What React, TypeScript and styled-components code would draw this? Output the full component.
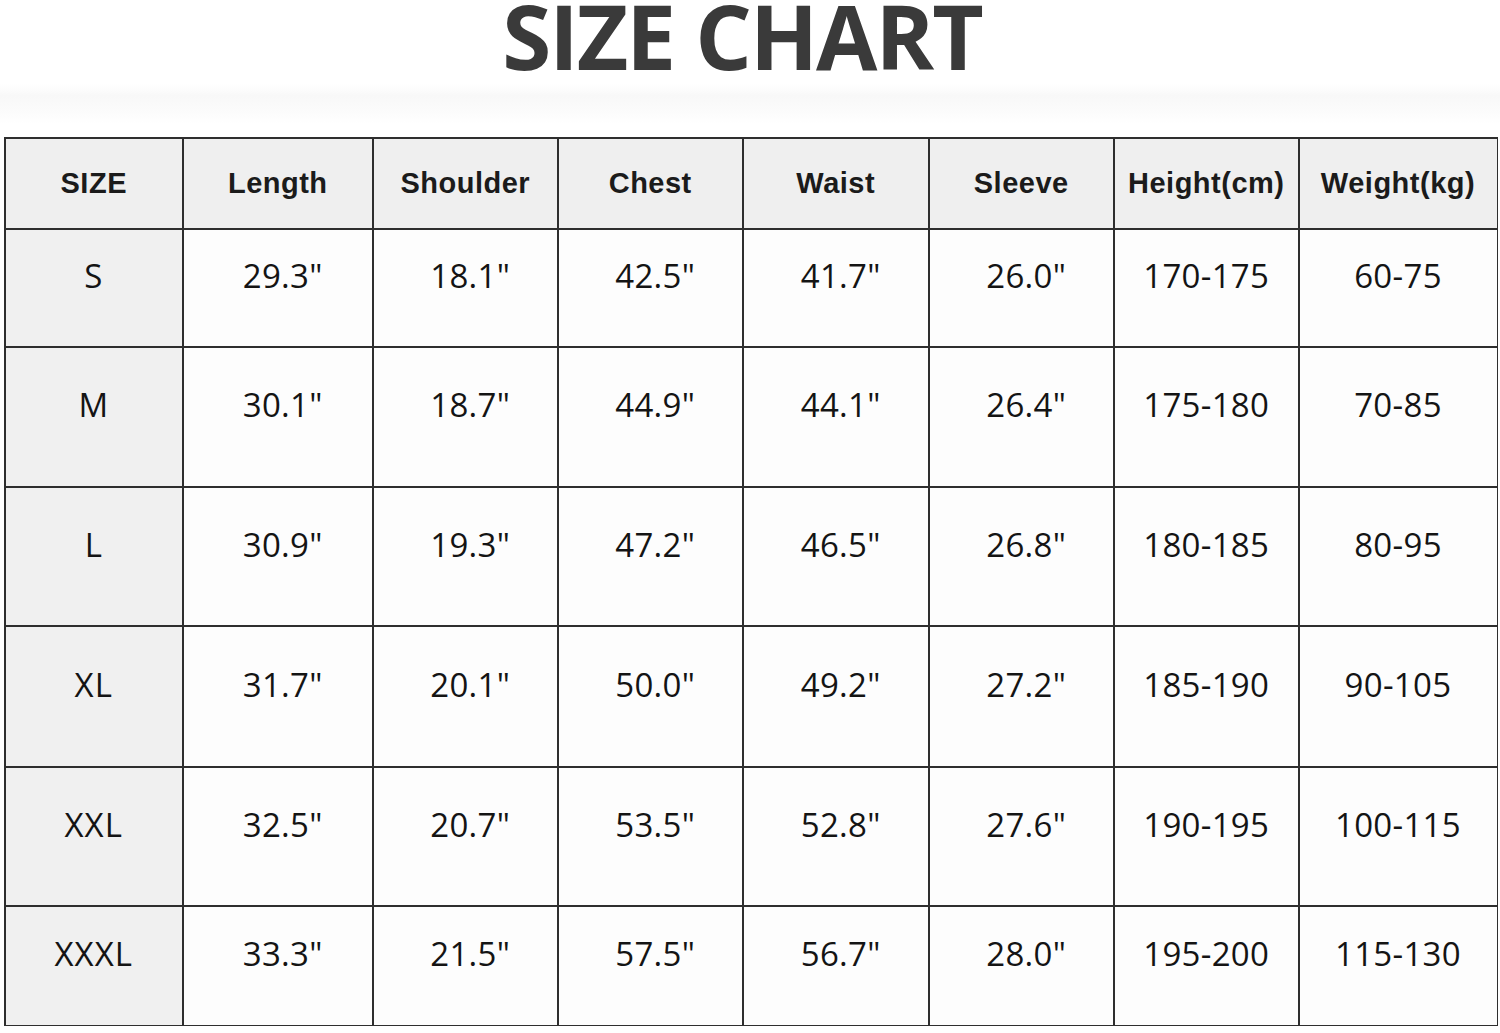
import styled, { createGlobalStyle } from 'styled-components';

const GlobalStyle = createGlobalStyle`
  html, body {
    margin: 0;
    padding: 0;
    background: #ffffff;
  }
`;

const COLUMNS = [
  'SIZE',
  'Length',
  'Shoulder',
  'Chest',
  'Waist',
  'Sleeve',
  'Height(cm)',
  'Weight(kg)',
];

const ROWS: string[][] = [
  ['S', '29.3"', '18.1"', '42.5"', '41.7"', '26.0"', '170-175', '60-75'],
  ['M', '30.1"', '18.7"', '44.9"', '44.1"', '26.4"', '175-180', '70-85'],
  ['L', '30.9"', '19.3"', '47.2"', '46.5"', '26.8"', '180-185', '80-95'],
  ['XL', '31.7"', '20.1"', '50.0"', '49.2"', '27.2"', '185-190', '90-105'],
  ['XXL', '32.5"', '20.7"', '53.5"', '52.8"', '27.6"', '190-195', '100-115'],
  ['XXXL', '33.3"', '21.5"', '57.5"', '56.7"', '28.0"', '195-200', '115-130'],
];

export default function App(): JSX.Element {
  return (
    <Page>
      <GlobalStyle />
      <TitleBar>
        <Title>SIZE CHART</Title>
      </TitleBar>
      <Chart>
        {COLUMNS.map((label) => (
          <HeadCell key={label}>{label}</HeadCell>
        ))}
        {ROWS.map((row) =>
          row.map((value, i) => (
            <Cell
              key={row[0] + i}
              $shaded={i === 0}
              $inches={value.endsWith('"')}
            >
              {value}
            </Cell>
          ))
        )}
      </Chart>
    </Page>
  );
}

const Page = styled.div`
  display: flex;
  flex-direction: column;
  width: 1500px;
  height: 1033px;
  background: #ffffff;
  overflow: hidden;
`;

const TitleBar = styled.div`
  display: flex;
  justify-content: center;
  align-items: flex-start;
  height: 136px;
  padding-right: 16px;
  box-sizing: border-box;
  background: linear-gradient(
    to bottom,
    #ffffff 0px,
    #ffffff 84px,
    #f8f8f8 96px,
    #fbfbfb 110px,
    #ffffff 124px
  );
`;

const Title = styled.h1`
  margin: 0;
  font-family: 'Open Sans', 'Liberation Sans', sans-serif;
  font-weight: 700;
  font-size: 89px;
  letter-spacing: -2px;
  color: #3a3a3a;
  line-height: 0.8;
`;

const Chart = styled.div`
  display: grid;
  grid-template-columns: 176.5px 188.5px 183.5px 183.5px 184.5px 183.5px 183.5px 197px;
  grid-template-rows: 89.5px 116.5px 138.5px 137.5px 139.5px 137.5px 118px;
  gap: 1.5px;
  width: fit-content;
  margin-left: 4px;
  margin-top: 1px;
  padding: 1.5px;
  background: #2e2e2e;
`;

const HeadCell = styled.div`
  display: flex;
  align-items: center;
  justify-content: center;
  background: #efefef;
  font-family: 'Liberation Sans', Arial, sans-serif;
  font-weight: 700;
  font-size: 29px;
  letter-spacing: 0.5px;
  color: #1b1b1b;
`;

const Cell = styled.div<{ $shaded: boolean; $inches: boolean }>`
  display: flex;
  align-items: center;
  justify-content: center;
  padding-bottom: 24px;
  padding-left: ${(p) => (p.$inches ? '10px' : '0')};
  background: ${(p) => (p.$shaded ? '#f0f0f0' : '#fdfdfd')};
  font-family: 'Open Sans', 'Noto Sans', sans-serif;
  font-weight: 500;
  font-size: 33px;
  letter-spacing: ${(p) => (p.$shaded ? '1px' : '0.3px')};
  color: #141414;
`;
